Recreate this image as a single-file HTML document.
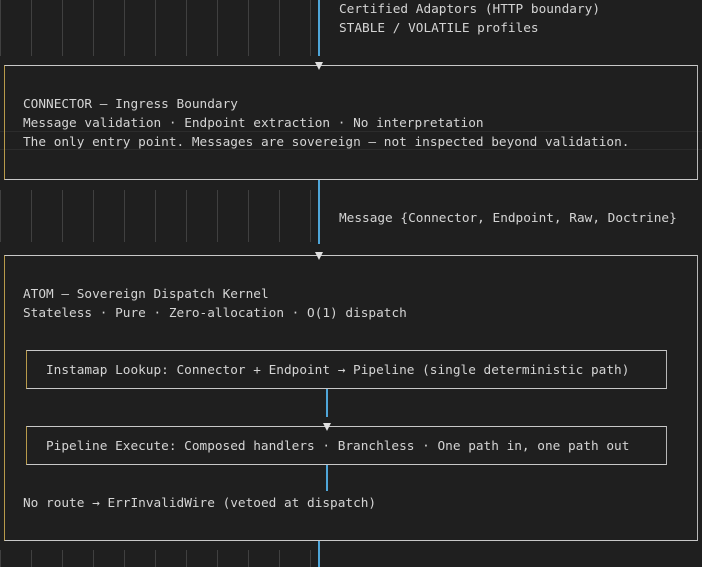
<!DOCTYPE html>
<html><head><meta charset="utf-8"><style>
body{margin:0;width:702px;height:567px;background:#1f1f1f;overflow:hidden;position:relative;font-family:"DejaVu Sans Mono","Liberation Mono",monospace;font-size:12.75px;color:#d4d4d4}
.t{position:absolute;white-space:pre;line-height:19px;height:19px}
.g{position:absolute;width:1px;background:#404040}
.b{position:absolute;width:2px;background:#4fa6d9}
.box{position:absolute;border-top:1px solid #c8c8c8;border-bottom:1px solid #c8c8c8;border-left:1px solid #b89a4a;border-right:1px solid #b8b8b8;box-sizing:border-box}
.tri{position:absolute;width:0;height:0;border-left:4px solid transparent;border-right:4px solid transparent;border-top:8px solid #e0e0e0}
</style></head><body>
<div class="g" style="left:0;top:0;height:56px"></div><div class="g" style="left:31px;top:0;height:56px"></div><div class="g" style="left:62px;top:0;height:56px"></div><div class="g" style="left:93px;top:0;height:56px"></div><div class="g" style="left:124px;top:0;height:56px"></div><div class="g" style="left:155px;top:0;height:56px"></div><div class="g" style="left:186px;top:0;height:56px"></div><div class="g" style="left:217px;top:0;height:56px"></div><div class="g" style="left:248px;top:0;height:56px"></div><div class="g" style="left:279px;top:0;height:56px"></div><div class="g" style="left:310px;top:0;height:56px"></div>
<div class="g" style="left:0;top:190px;height:52px"></div><div class="g" style="left:31px;top:190px;height:52px"></div><div class="g" style="left:62px;top:190px;height:52px"></div><div class="g" style="left:93px;top:190px;height:52px"></div><div class="g" style="left:124px;top:190px;height:52px"></div><div class="g" style="left:155px;top:190px;height:52px"></div><div class="g" style="left:186px;top:190px;height:52px"></div><div class="g" style="left:217px;top:190px;height:52px"></div><div class="g" style="left:248px;top:190px;height:52px"></div><div class="g" style="left:279px;top:190px;height:52px"></div><div class="g" style="left:310px;top:190px;height:52px"></div>
<div class="g" style="left:0;top:550px;height:17px"></div><div class="g" style="left:31px;top:550px;height:17px"></div><div class="g" style="left:62px;top:550px;height:17px"></div><div class="g" style="left:93px;top:550px;height:17px"></div><div class="g" style="left:124px;top:550px;height:17px"></div><div class="g" style="left:155px;top:550px;height:17px"></div><div class="g" style="left:186px;top:550px;height:17px"></div><div class="g" style="left:217px;top:550px;height:17px"></div><div class="g" style="left:248px;top:550px;height:17px"></div><div class="g" style="left:279px;top:550px;height:17px"></div><div class="g" style="left:310px;top:550px;height:17px"></div>
<div style="position:absolute;left:0;top:131px;width:702px;height:19px;border-top:1px solid #2c2c2c;border-bottom:1px solid #2c2c2c;box-sizing:border-box"></div>
<div class="b" style="left:318px;top:0;height:56px"></div>
<div class="b" style="left:318px;top:180px;height:64px"></div>
<div class="b" style="left:318px;top:541px;height:26px"></div>
<div class="b" style="left:326px;top:389px;height:28px"></div>
<div class="b" style="left:326px;top:465px;height:26px"></div>
<div class="box" style="left:4px;top:65px;width:694px;height:115px"></div>
<div class="box" style="left:4px;top:255px;width:694px;height:286px"></div>
<div class="box" style="left:26px;top:350px;width:641px;height:39px"></div>
<div class="box" style="left:26px;top:426px;width:641px;height:39px"></div>
<div class="tri" style="left:315px;top:62px"></div>
<div class="tri" style="left:315px;top:252px"></div>
<div class="tri" style="left:323px;top:423px"></div>
<div class="t" style="left:339px;top:0px">Certified Adaptors (HTTP boundary)</div>
<div class="t" style="left:339px;top:19px">STABLE / VOLATILE profiles</div>
<div class="t" style="left:23px;top:95px">CONNECTOR — Ingress Boundary</div>
<div class="t" style="left:23px;top:114px">Message validation · Endpoint extraction · No interpretation</div>
<div class="t" style="left:23px;top:133px">The only entry point. Messages are sovereign — not inspected beyond validation.</div>
<div class="t" style="left:339px;top:209px">Message {Connector, Endpoint, Raw, Doctrine}</div>
<div class="t" style="left:23px;top:285px">ATOM — Sovereign Dispatch Kernel</div>
<div class="t" style="left:23px;top:304px">Stateless · Pure · Zero-allocation · O(1) dispatch</div>
<div class="t" style="left:46px;top:361px">Instamap Lookup: Connector + Endpoint → Pipeline (single deterministic path)</div>
<div class="t" style="left:46px;top:437px">Pipeline Execute: Composed handlers · Branchless · One path in, one path out</div>
<div class="t" style="left:23px;top:494px">No route → ErrInvalidWire (vetoed at dispatch)</div>
</body></html>
